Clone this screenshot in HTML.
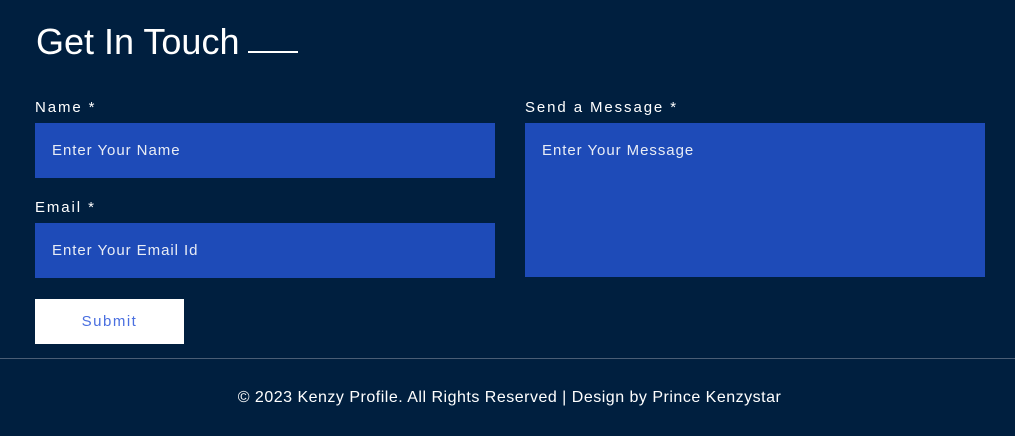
<!DOCTYPE html>
<html><head><style>
body{margin:0;width:1015px;height:436px;background:#001f3f;font-family:"Liberation Sans",sans-serif;color:#fff;position:relative;overflow:hidden}
.a{position:absolute}
h1{position:absolute;left:36px;top:21px;margin:0;font-weight:normal;font-size:36px}
.line{left:248px;top:51px;width:50px;height:2px;background:#fff}
.lbl{font-size:15px;letter-spacing:1.9px}
.box{background:#1e4bb8;font-size:15px;letter-spacing:.95px;color:#e8ecf5;box-sizing:border-box;padding-left:17px}
</style></head><body>
<h1>Get In Touch</h1><div class="a line"></div>
<div class="a lbl" style="left:35px;top:99px">Name *</div>
<div class="a box" style="left:35px;top:123px;width:460px;height:55px;line-height:55px">Enter Your Name</div>
<div class="a lbl" style="left:35px;top:199px">Email *</div>
<div class="a box" style="left:35px;top:223px;width:460px;height:55px;line-height:55px">Enter Your Email Id</div>
<div class="a lbl" style="left:525px;top:99px">Send a Message *</div>
<div class="a box" style="left:525px;top:123px;width:460px;height:154px;padding-top:19px;line-height:17px">Enter Your Message</div>
<div class="a" style="left:35px;top:299px;width:149px;height:45px;background:#fff;color:#4a6fe0;font-size:15px;letter-spacing:1.5px;text-align:center;line-height:45px">Submit</div>
<div class="a" style="left:0;top:358px;width:1015px;height:1px;background:#4a5d75"></div>
<div class="a" style="left:0;width:1019px;top:389px;text-align:center;font-size:16px;letter-spacing:.5px">© 2023 Kenzy Profile. All Rights Reserved | Design by Prince Kenzystar</div>
</body></html>
